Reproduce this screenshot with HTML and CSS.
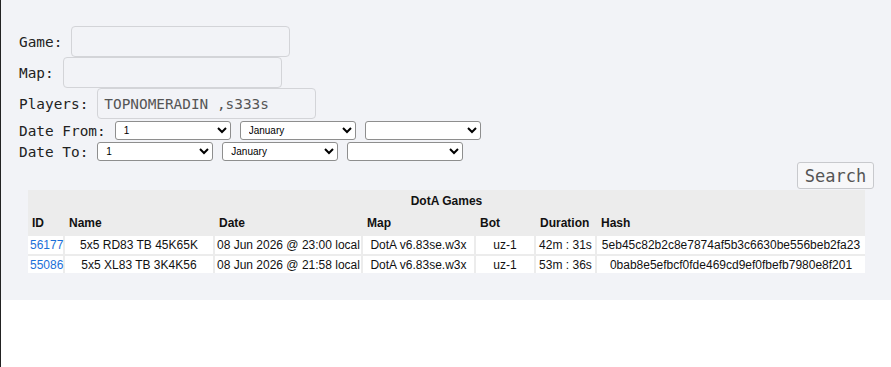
FILE: index.html
```html
<!DOCTYPE html>
<html lang="en">
<head>
<meta charset="UTF-8">
<title>DotA Games</title>
<link rel="stylesheet" href="styles.css">
</head>
<body>
<div class="panel">
<form class="search">
<div class="row"><label>Game:</label><input type="text" class="field"></div>
<div class="row"><label>Map:</label><input type="text" class="field"></div>
<div class="row"><label>Players:</label><input type="text" class="field" value="TOPNOMERADIN ,s333s"></div>
<div class="row date first">
<label>Date From:</label>
<select><option>1</option></select>
<select><option>January</option></select>
<select><option></option></select>
</div>
<div class="row date">
<label>Date To:</label>
<select><option>1</option></select>
<select><option>January</option></select>
<select><option></option></select>
</div>
<div class="actions"><button type="button" class="btn">Search</button></div>
</form>

<table class="games">
<colgroup>
<col style="width:37px"><col style="width:150px"><col style="width:148px"><col style="width:113px">
<col style="width:60px"><col style="width:61px"><col style="width:268px">
</colgroup>
<thead>
<tr class="cap"><th colspan="7">DotA Games</th></tr>
<tr class="head">
<th>ID</th><th>Name</th><th>Date</th><th>Map</th><th>Bot</th><th>Duration</th><th>Hash</th>
</tr>
</thead>
<tbody>
<tr>
<td class="id"><a href="#">56177</a></td>
<td>5x5 RD83 TB 45K65K</td>
<td>08 Jun 2026 @ 23:00 local</td>
<td>DotA v6.83se.w3x</td>
<td>uz-1</td>
<td>42m : 31s</td>
<td>5eb45c82b2c8e7874af5b3c6630be556beb2fa23</td>
</tr>
<tr>
<td class="id"><a href="#">55086</a></td>
<td>5x5 XL83 TB 3K4K56</td>
<td>08 Jun 2026 @ 21:58 local</td>
<td>DotA v6.83se.w3x</td>
<td>uz-1</td>
<td>53m : 36s</td>
<td>0bab8e5efbcf0fde469cd9ef0fbefb7980e8f201</td>
</tr>
</tbody>
</table>
</div>
</body>
</html>
```

FILE: styles.css
```css
*{
    box-sizing:border-box;
    margin:0;
    padding:0;
}
body{
    min-height:100vh;
    border-left:1px solid #222;
    background:#fff;
    font-family:"DejaVu Sans Mono", monospace;
}
.panel{
    background:#f2f3f7;
    padding:26px 17px 27px 18px;
}
.row{
    display:flex;
    align-items:center;
    gap:9px;
    font-size:14.4px;
    color:#222;
}
.field{
    width:219px;
    height:31px;
    padding:0 6px;
    border:1px solid #d3d4d8;
    border-radius:4px;
    background:#f2f3f7;
    font-family:"DejaVu Sans Mono", monospace;
    font-size:14.4px;
    color:#555;
}
.date{
    height:21px;
}
.date.first{
    margin-top:1px;
}
select{
    width:116px;
    height:19px;
    padding:0 4px;
    border:1px solid #8e8e8e;
    border-radius:3px;
    background:#fff;
    font-family:Arial, "Liberation Sans", sans-serif;
    font-size:10px;
    color:#000;
}
.actions{
    display:flex;
    justify-content:flex-end;
}
.btn{
    width:77px;
    height:27px;
    border:1px solid #c8c9cd;
    border-radius:3px;
    background:#f7f7f9;
    font-family:"DejaVu Sans Mono", monospace;
    font-size:17px;
    color:#555;
}
.games{
    margin:1px auto 0;
    width:837px;
    table-layout:fixed;
    border-collapse:separate;
    border-spacing:0;
    background:#ececec;
    font-family:Arial, "Liberation Sans", sans-serif;
    font-size:12px;
    color:#111;
}
.games th{
    text-align:left;
    font-weight:bold;
    padding:0 4px;
}
.games .cap th{
    text-align:center;
    height:19px;
    padding-top:2px;
}
.games .head th{
    height:26px;
    vertical-align:middle;
    padding-top:1px;
}
.games td{
    background:#fff;
    text-align:center;
    white-space:nowrap;
    height:19px;
    padding:0 2px;
    border-right:2px solid #ececec;
    border-top:1px solid #ececec;
}
.games tr + tr td{
    border-top-width:2px;
}
.games td:last-child{
    border-right:none;
}
.games td.id{
    text-align:left;
}
.games a{
    color:#1b6fd8;
    text-decoration:none;
}
```
